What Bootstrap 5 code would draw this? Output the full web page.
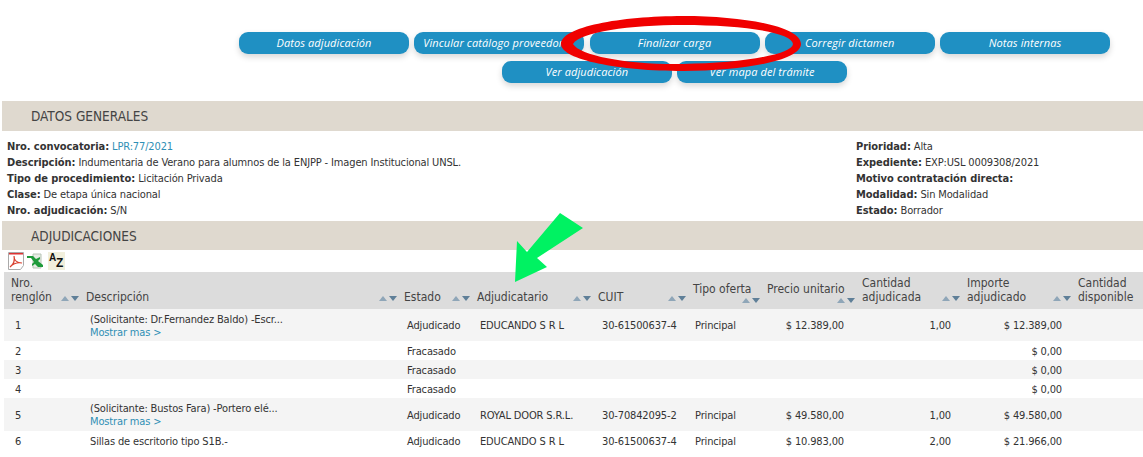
<!DOCTYPE html>
<html lang="es">
<head>
<meta charset="utf-8">
<title>Adjudicación</title>
<link rel="stylesheet" href="https://cdn.jsdelivr.net/npm/bootstrap@5.3.0/dist/css/bootstrap.min.css">
<style>
html,body{height:457px;overflow:hidden;background:#fff}
body{position:relative;font-family:"DejaVu Sans Condensed","DejaVu Sans",sans-serif;font-size:11px;letter-spacing:-.14px;color:#333;line-height:16px}
.acciones{margin-left:206px;padding-top:32px;height:101px;gap:7px 5.25px;align-content:flex-start}
.accion{width:170px;height:22px;padding:0 0 0 9px;border:0;border-radius:9px;background:#1f90c3;color:#fff;font:italic 11px/22px "Open Sans",sans-serif;letter-spacing:.1px;box-shadow:0 3px 6px rgba(0,0,0,.16);white-space:nowrap;overflow:hidden;text-align:center}
.accion.lleno{text-align:left}
.accion:not(.lleno){padding:0}
.seccion{margin-left:2px;background:#dfd9cf;padding-left:29px;color:#444;font-size:13.5px;letter-spacing:0}
.s1{height:30px;line-height:30px}
.s2{height:29px;line-height:30px}
.datos{height:90px;padding:8px 0 0 7px}
.datos-der{width:287px}
.datos b{font-weight:700;letter-spacing:-.06px}
a.enlace{color:#2f8fb5;text-decoration:none}
.iconos{height:22px;padding:2px 0 0 8px;gap:3px}
.tabla-wrap{margin-left:4px}
table.lista{table-layout:fixed;width:1139px;margin:0;font-size:11px;letter-spacing:-.14px;line-height:13px;--bs-table-bg:#fff;--bs-table-striped-bg:#f4f4f4;--bs-table-striped-color:#333;--bs-table-color:#333}
table.lista th{background:#dcdcdc;height:37px;padding:3px 3px 5px 7px;vertical-align:bottom;font-weight:400;font-size:12px;line-height:14px;letter-spacing:0;color:#444;box-shadow:none}
table.lista th.hc{padding-left:4px}
table.lista td{padding:1px 3px 0;vertical-align:middle;height:19px}
table.lista tr.alto1 td{height:32px}
table.lista tr.alto2 td{height:33px}
table.lista tr.bajo td{height:19px}
.cab{display:flex;justify-content:space-between;align-items:flex-end;gap:2px}
.cabw{display:block}
.orden{display:block;flex:none;margin-bottom:2px}
.orden-der{margin:1px 0 0 auto}
table.lista td.c-n{padding-left:11px}
table.lista td.c-d{padding-left:8px}
table.lista td.c-e{padding-left:7px}
table.lista td.c-c{padding-left:8px}
table.lista td.c-p{padding-left:6px}
table.lista td.c-r{text-align:right;padding-right:14px}
table.lista td.c-q{text-align:right;padding-right:12px}
.over{position:absolute;left:0;top:0;pointer-events:none}
.az{width:17px;height:18px;font:700 10px/10px "Liberation Sans",sans-serif;letter-spacing:0;background:#f1efdc;color:#111;display:block;position:relative}
.az i{position:absolute;font-style:normal;left:1px;top:1px}
.az u{position:absolute;text-decoration:none;left:8px;top:6px;font-size:12px}
</style>
</head>
<body>
<div class="acciones d-flex flex-wrap justify-content-center">
  <button class="accion" type="button">Datos adjudicación</button>
  <button class="accion lleno" type="button">Vincular catálogo proveedores</button>
  <button class="accion" type="button">Finalizar carga</button>
  <button class="accion" type="button">Corregir dictamen</button>
  <button class="accion" type="button">Notas internas</button>
  <button class="accion" type="button">Ver adjudicación</button>
  <button class="accion" type="button">Ver mapa del trámite</button>
</div>

<div class="seccion s1">DATOS GENERALES</div>
<div class="datos d-flex">
  <div class="flex-grow-1">
    <div><b>Nro. convocatoria:</b> <a class="enlace" href="#">LPR:77/2021</a></div>
    <div><b>Descripción:</b> Indumentaria de Verano para alumnos de la ENJPP - Imagen Institucional UNSL.</div>
    <div><b>Tipo de procedimiento:</b> Licitación Privada</div>
    <div><b>Clase:</b> De etapa única nacional</div>
    <div><b>Nro. adjudicación:</b> S/N</div>
  </div>
  <div class="datos-der">
    <div><b>Prioridad:</b> Alta</div>
    <div><b>Expediente:</b> EXP:USL 0009308/2021</div>
    <div><b>Motivo contratación directa:</b></div>
    <div><b>Modalidad:</b> Sin Modalidad</div>
    <div><b>Estado:</b> Borrador</div>
  </div>
</div>
<div class="seccion s2">ADJUDICACIONES</div>
<div class="iconos d-flex align-items-start">
  <svg width="16" height="18" viewBox="0 0 16 18" aria-label="PDF"><path d="M.5.5h15v13l-3 4H.5z" fill="#fff" stroke="#aaa"/><path d="M1 1v1.5h14V1z" fill="#d33"/><path d="M2 15c3-2 5-6 4-11 0 4 3 7 8 7-5-1-9 1-12 4z" fill="none" stroke="#d9402f" stroke-width="1.2"/></svg>
  <svg width="18" height="18" viewBox="0 0 18 18" aria-label="Excel"><path d="M6 2h8v14H6z" fill="#e6ede4" stroke="#b8c4b6"/><path d="M0 4h6l3 3 4-2v2l-2 2 5 4v2h-5l-3-3-3 2v-2l2-2-3-4H0z" fill="#1f9b3b"/></svg>
  <span class="az" aria-label="Ordenar"><i>A</i><u>Z</u></span>
</div>

<div class="tabla-wrap">
<table class="table table-striped table-borderless lista">
  <colgroup>
    <col style="width:78px"><col style="width:318px"><col style="width:73px"><col style="width:121px"><col style="width:95px"><col style="width:74px"><col style="width:95px"><col style="width:105px"><col style="width:111px"><col>
  </colgroup>
  <thead>
    <tr>
      <th><div class="cab"><span>Nro.<br>renglón</span><svg class="orden" width="18" height="7" viewBox="0 0 18 7"><path d="M0 6l4-5 4 5z" fill="#8fa6b8"/><path d="M10 1h8l-4 5z" fill="#5f7f98"/></svg></div></th>
      <th class="hc"><div class="cab"><span>Descripción</span><svg class="orden" width="18" height="7" viewBox="0 0 18 7"><path d="M0 6l4-5 4 5z" fill="#8fa6b8"/><path d="M10 1h8l-4 5z" fill="#5f7f98"/></svg></div></th>
      <th class="hc"><div class="cab"><span>Estado</span><svg class="orden" width="18" height="7" viewBox="0 0 18 7"><path d="M0 6l4-5 4 5z" fill="#8fa6b8"/><path d="M10 1h8l-4 5z" fill="#5f7f98"/></svg></div></th>
      <th class="hc"><div class="cab"><span>Adjudicatario</span><svg class="orden" width="18" height="7" viewBox="0 0 18 7"><path d="M0 6l4-5 4 5z" fill="#8fa6b8"/><path d="M10 1h8l-4 5z" fill="#5f7f98"/></svg></div></th>
      <th class="hc"><div class="cab"><span>CUIT</span><svg class="orden" width="18" height="7" viewBox="0 0 18 7"><path d="M0 6l4-5 4 5z" fill="#8fa6b8"/><path d="M10 1h8l-4 5z" fill="#5f7f98"/></svg></div></th>
      <th class="hc"><span class="cabw">Tipo oferta</span><svg class="orden orden-der" width="18" height="7" viewBox="0 0 18 7"><path d="M0 6l4-5 4 5z" fill="#8fa6b8"/><path d="M10 1h8l-4 5z" fill="#5f7f98"/></svg></th>
      <th class="hc"><span class="cabw">Precio unitario</span><svg class="orden orden-der" width="18" height="7" viewBox="0 0 18 7"><path d="M0 6l4-5 4 5z" fill="#8fa6b8"/><path d="M10 1h8l-4 5z" fill="#5f7f98"/></svg></th>
      <th class="hc"><div class="cab"><span>Cantidad<br>adjudicada</span><svg class="orden" width="18" height="7" viewBox="0 0 18 7"><path d="M0 6l4-5 4 5z" fill="#8fa6b8"/><path d="M10 1h8l-4 5z" fill="#5f7f98"/></svg></div></th>
      <th class="hc"><div class="cab"><span>Importe<br>adjudicado</span><svg class="orden" width="18" height="7" viewBox="0 0 18 7"><path d="M0 6l4-5 4 5z" fill="#8fa6b8"/><path d="M10 1h8l-4 5z" fill="#5f7f98"/></svg></div></th>
      <th class="hc">Cantidad<br>disponible</th>
    </tr>
  </thead>
  <tbody>
    <tr class="alto1"><td class="c-n">1</td><td class="c-d">(Solicitante: Dr.Fernandez Baldo) -Escr...<br><a class="enlace" href="#">Mostrar mas &gt;</a></td><td class="c-e">Adjudicado</td><td class="c-e">EDUCANDO S R L</td><td class="c-c">30-61500637-4</td><td class="c-p">Principal</td><td class="c-r">$ 12.389,00</td><td class="c-q">1,00</td><td class="c-q">$ 12.389,00</td><td></td></tr>
    <tr class="bajo"><td class="c-n">2</td><td></td><td class="c-e">Fracasado</td><td></td><td></td><td></td><td></td><td></td><td class="c-q">$ 0,00</td><td></td></tr>
    <tr class="bajo"><td class="c-n">3</td><td></td><td class="c-e">Fracasado</td><td></td><td></td><td></td><td></td><td></td><td class="c-q">$ 0,00</td><td></td></tr>
    <tr class="bajo"><td class="c-n">4</td><td></td><td class="c-e">Fracasado</td><td></td><td></td><td></td><td></td><td></td><td class="c-q">$ 0,00</td><td></td></tr>
    <tr class="alto2"><td class="c-n">5</td><td class="c-d">(Solicitante: Bustos Fara) -Portero elé...<br><a class="enlace" href="#">Mostrar mas &gt;</a></td><td class="c-e">Adjudicado</td><td class="c-e">ROYAL DOOR S.R.L.</td><td class="c-c">30-70842095-2</td><td class="c-p">Principal</td><td class="c-r">$ 49.580,00</td><td class="c-q">1,00</td><td class="c-q">$ 49.580,00</td><td></td></tr>
    <tr class="bajo"><td class="c-n">6</td><td class="c-d">Sillas de escritorio tipo S1B.-</td><td class="c-e">Adjudicado</td><td class="c-e">EDUCANDO S R L</td><td class="c-c">30-61500637-4</td><td class="c-p">Principal</td><td class="c-r">$ 10.983,00</td><td class="c-q">2,00</td><td class="c-q">$ 21.966,00</td><td></td></tr>
  </tbody>
</table>
</div>

<svg class="over" width="1143" height="457" viewBox="0 0 1143 457" aria-hidden="true">
  <path fill-rule="evenodd" fill="#f00000" d="M561 44C561 27 620 16 683 16C746 16 801 27 801 44C801 60 746 71 683 71C620 71 561 60 561 44ZM573 44C580 56 630 65 683 64C740 63 792 55 793 44C792 32 740 25 683 25C630 25 580 32 573 44Z"/>
  <path fill="#00f262" d="M515 282L517 241L527 252L560 213L583 228L537 258L547 267Z"/>
</svg>
</body>
</html>
